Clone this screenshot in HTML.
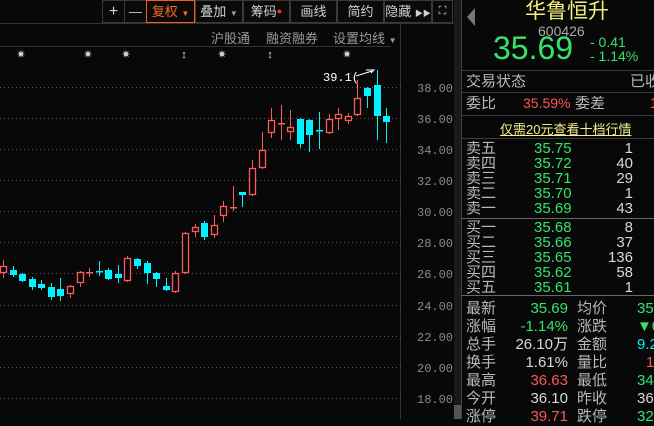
<!DOCTYPE html>
<html><head><meta charset="utf-8"><style>
*{margin:0;padding:0;box-sizing:border-box}
body{width:654px;height:419px;background:#080808;overflow:hidden;position:relative;font-family:"Liberation Sans","Noto Sans CJK SC",sans-serif;color:#b8b8b8}
.a{position:absolute;white-space:nowrap}
.btn{position:absolute;top:0;height:23px;border:1px solid #3a3a3a;color:#d0d0d0;font-size:13px;line-height:21px;text-align:center;background:#0a0a0a}
.g{color:#33e46a}.r{color:#ff5555}.w{color:#d8d8d8}.cy{color:#00f0ff}.y{color:#f4f08a}
.row{position:absolute;left:466px;font-size:15px;line-height:15px;width:188px;height:18px;white-space:nowrap;overflow:hidden}
.row span{position:absolute;top:0}
.hl{position:absolute;height:1px;background:#3a3a3a}
</style></head><body>
<div class="btn" style="left:102px;width:23px;font-size:16px">+</div>
<div class="btn" style="left:124px;width:23px">—</div>
<div class="btn" style="left:146px;width:49px;border-color:#ff5a1a;color:#ff6a1a">复权 <span style="font-size:8px">▼</span></div>
<div class="btn" style="left:195px;width:48px">叠加 <span style="font-size:8px;color:#999">▼</span></div>
<div class="btn" style="left:243px;width:47px">筹码<span style="color:#ff3030;font-size:9px;vertical-align:top">●</span></div>
<div class="btn" style="left:290px;width:47px">画线</div>
<div class="btn" style="left:337px;width:47px">简约</div>
<div class="btn" style="left:384px;width:48px">隐藏 <span style="font-size:8px">▶▶</span></div>
<div class="btn" style="left:432px;width:21px;font-size:11px">⛶</div>
<div class="hl" style="left:0;top:23px;width:454px;background:#333"></div>
<div class="a" style="left:211px;top:28px;font-size:13px;color:#9a9a9a">沪股通</div>
<div class="a" style="left:266px;top:28px;font-size:13px;color:#9a9a9a">融资融券</div>
<div class="a" style="left:333px;top:28px;font-size:13px;color:#9a9a9a">设置均线 <span style="font-size:8px">▼</span></div>
<div class="hl" style="left:0;top:46px;width:391px;background:#333"></div>
<div style="position:absolute;left:400px;top:24px;width:1px;height:395px;background:#333"></div>
<div style="position:absolute;left:454px;top:0;width:7px;height:419px;background:#1a1a1a"></div>
<div style="position:absolute;left:454px;top:405px;width:7px;height:14px;background:#555"></div>
<div style="position:absolute;left:461px;top:0;width:1px;height:419px;background:#444"></div>
<svg class="a" style="left:0;top:0" width="454" height="419">
<g stroke="#555" stroke-dasharray="1 3" stroke-width="1">
<line x1="0" x2="402" y1="87.5" y2="87.5"/><line x1="0" x2="402" y1="118.5" y2="118.5"/><line x1="0" x2="402" y1="149.5" y2="149.5"/><line x1="0" x2="402" y1="180.5" y2="180.5"/><line x1="0" x2="402" y1="211.5" y2="211.5"/><line x1="0" x2="402" y1="242.5" y2="242.5"/><line x1="0" x2="402" y1="273.5" y2="273.5"/><line x1="0" x2="402" y1="305.5" y2="305.5"/><line x1="0" x2="402" y1="336.5" y2="336.5"/><line x1="0" x2="402" y1="367.5" y2="367.5"/><line x1="0" x2="402" y1="398.5" y2="398.5"/>
</g>
<g fill="#8a8a8a" font-family="Liberation Mono,monospace" font-size="12">
<text x="417" y="92">38.00</text><text x="417" y="123">36.00</text><text x="417" y="154">34.00</text><text x="417" y="185">32.00</text><text x="417" y="216">30.00</text><text x="417" y="247">28.00</text><text x="417" y="278">26.00</text><text x="417" y="310">24.00</text><text x="417" y="341">22.00</text><text x="417" y="372">20.00</text><text x="417" y="403">18.00</text>
</g>
<g fill="#ddd" font-size="11" text-anchor="middle">
<text x="21" y="58">✷</text><text x="88" y="58">✷</text><text x="126" y="58">✷</text><text x="184" y="58">↕</text><text x="222" y="58">✷</text><text x="270" y="58">↕</text><text x="347" y="58">✷</text>
</g>
<text x="323" y="81" fill="#fff" font-size="12" font-family="Liberation Mono,monospace">39.1(</text>
<path d="M356 76 L372 71 M366 70 L374 70 L371 73" stroke="#fff" fill="none"/>
<g id="c"></g>
</svg>
<div class="a" style="left:467px;top:8px;width:0;height:0;border-top:9px solid transparent;border-bottom:9px solid transparent;border-right:8px solid #777"></div>
<div class="a" style="left:525px;top:0;font-size:21px;line-height:24px;color:#f4f07a">华鲁恒升</div>
<div class="a" style="left:538px;top:23px;font-size:14px;color:#aaa">600426</div>
<div class="a g" style="left:493px;top:31px;font-size:32px;line-height:34px">35.69</div>
<div class="a g" style="left:590px;top:35px;font-size:14px;line-height:14px">- 0.41</div>
<div class="a g" style="left:590px;top:49px;font-size:14px;line-height:14px">- 1.14%</div>
<div class="hl" style="left:462px;top:70px;width:192px"></div>
<div class="row" style="top:74px">交易状态<span style="left:164px">已收</span></div>
<div class="hl" style="left:462px;top:92px;width:192px"></div>
<div class="row" style="top:96px">委比<span class="r" style="left:57px;font-size:14px">35.59%</span><span style="left:109px">委差</span><span class="r" style="left:184px">1</span></div>
<div class="hl" style="left:462px;top:115px;width:192px"></div>
<div class="a" style="left:500px;top:119px;font-size:13px;color:#f4f08a;text-decoration:underline">仅需20元查看十档行情</div>
<div class="hl" style="left:462px;top:138px;width:192px"></div>
<div class="row" style="top:141px">卖五<span class="g" style="left:68px">35.75</span><span class="w" style="right:21px">1</span></div>
<div class="row" style="top:156px">卖四<span class="g" style="left:68px">35.72</span><span class="w" style="right:21px">40</span></div>
<div class="row" style="top:171px">卖三<span class="g" style="left:68px">35.71</span><span class="w" style="right:21px">29</span></div>
<div class="row" style="top:186px">卖二<span class="g" style="left:68px">35.70</span><span class="w" style="right:21px">1</span></div>
<div class="row" style="top:201px">卖一<span class="g" style="left:68px">35.69</span><span class="w" style="right:21px">43</span></div>
<div class="hl" style="left:462px;top:218px;width:192px;background:#666"></div>
<div class="row" style="top:220px">买一<span class="g" style="left:68px">35.68</span><span class="w" style="right:21px">8</span></div>
<div class="row" style="top:235px">买二<span class="g" style="left:68px">35.66</span><span class="w" style="right:21px">37</span></div>
<div class="row" style="top:250px">买三<span class="g" style="left:68px">35.65</span><span class="w" style="right:21px">136</span></div>
<div class="row" style="top:265px">买四<span class="g" style="left:68px">35.62</span><span class="w" style="right:21px">58</span></div>
<div class="row" style="top:280px">买五<span class="g" style="left:68px">35.61</span><span class="w" style="right:21px">1</span></div>
<div class="hl" style="left:462px;top:295px;width:192px;background:#666"></div>
<div class="row" style="top:300px;line-height:17px">最新<span class="g" style="right:86px">35.69</span><span style="left:111px">均价</span><span class="g" style="left:171px">35.</span></div>
<div class="row" style="top:318px;line-height:17px">涨幅<span class="g" style="right:86px">-1.14%</span><span style="left:111px">涨跌</span><span class="g" style="left:171px">▼0.</span></div>
<div class="row" style="top:336px;line-height:17px">总手<span class="w" style="right:86px">26.10万</span><span style="left:111px">金额</span><span class="cy" style="left:171px">9.20</span></div>
<div class="row" style="top:354px;line-height:17px">换手<span class="w" style="right:86px">1.61%</span><span style="left:111px">量比</span><span class="r" style="left:180px">1.</span></div>
<div class="row" style="top:372px;line-height:17px">最高<span class="r" style="right:86px">36.63</span><span style="left:111px">最低</span><span class="g" style="left:171px">34.</span></div>
<div class="row" style="top:390px;line-height:17px">今开<span class="w" style="right:86px">36.10</span><span style="left:111px">昨收</span><span class="w" style="left:171px">36.</span></div>
<div class="row" style="top:408px;line-height:17px">涨停<span class="r" style="right:86px">39.71</span><span style="left:111px">跌停</span><span class="g" style="left:171px">32.</span></div>
<script>
var d=[["r",266,273,260,278],["c",270,275,266,277],["c",274,281,273,282],["c",279,287,277,290],["c",284,288,280,290],["c",287,297,283,300],["c",289,296,278,301],["r",286,294,285,298],["r",272,283,271,287],["r",272,273,268,277],["c",271,272,261,276],["c",270,279,268,280],["c",274,278,265,283],["r",258,281,256,282],["c",259,266,258,269],["c",263,273,261,284],["c",273,279,272,287],["c",286,290,278,291],["r",273,292,271,293],["r",233,273,232,274],["r",227,232,224,237],["c",223,237,221,240],["r",225,235,215,238],["r",206,216,201,222],["r",207,208,186,211],["c",192,195,192,207],["r",168,195,160,196],["r",150,168,132,169],["r",120,133,108,138],["r",123,124,105,140],["r",127,132,110,140],["c",119,144,118,148],["c",120,135,119,152],["c",130,131,112,149],["r",119,133,114,134],["r",114,119,108,130],["r",116,121,113,124],["r",98,115,80,116],["c",88,96,87,108],["c",85,116,70,140],["c",116,122,108,143]];
var s="";d.forEach(function(k,i){var c=12.5+(i-1)*9.58;c=Math.round(c)+0.5;var col=k[0]=="r"?"#ff5a5a":"#00f4ff";
s+='<line x1="'+c+'" x2="'+c+'" y1="'+k[3]+'" y2="'+k[4]+'" stroke="'+col+'"/>';
var h=Math.max(k[2]-k[1],1);
if(k[0]=="r"){if(h<=1)s+='<rect x="'+(c-3.5)+'" y="'+k[1]+'" width="7" height="1.5" fill="'+col+'"/>';else s+='<rect x="'+(c-3)+'" y="'+(k[1]+0.5)+'" width="6" height="'+(h-1)+'" fill="#080808" stroke="'+col+'" stroke-width="1.3"/>';}
else s+='<rect x="'+(c-3.5)+'" y="'+k[1]+'" width="7" height="'+(h<=1?1.5:h)+'" fill="'+col+'"/>';});
document.getElementById("c").innerHTML=s;
</script>
</body></html>
